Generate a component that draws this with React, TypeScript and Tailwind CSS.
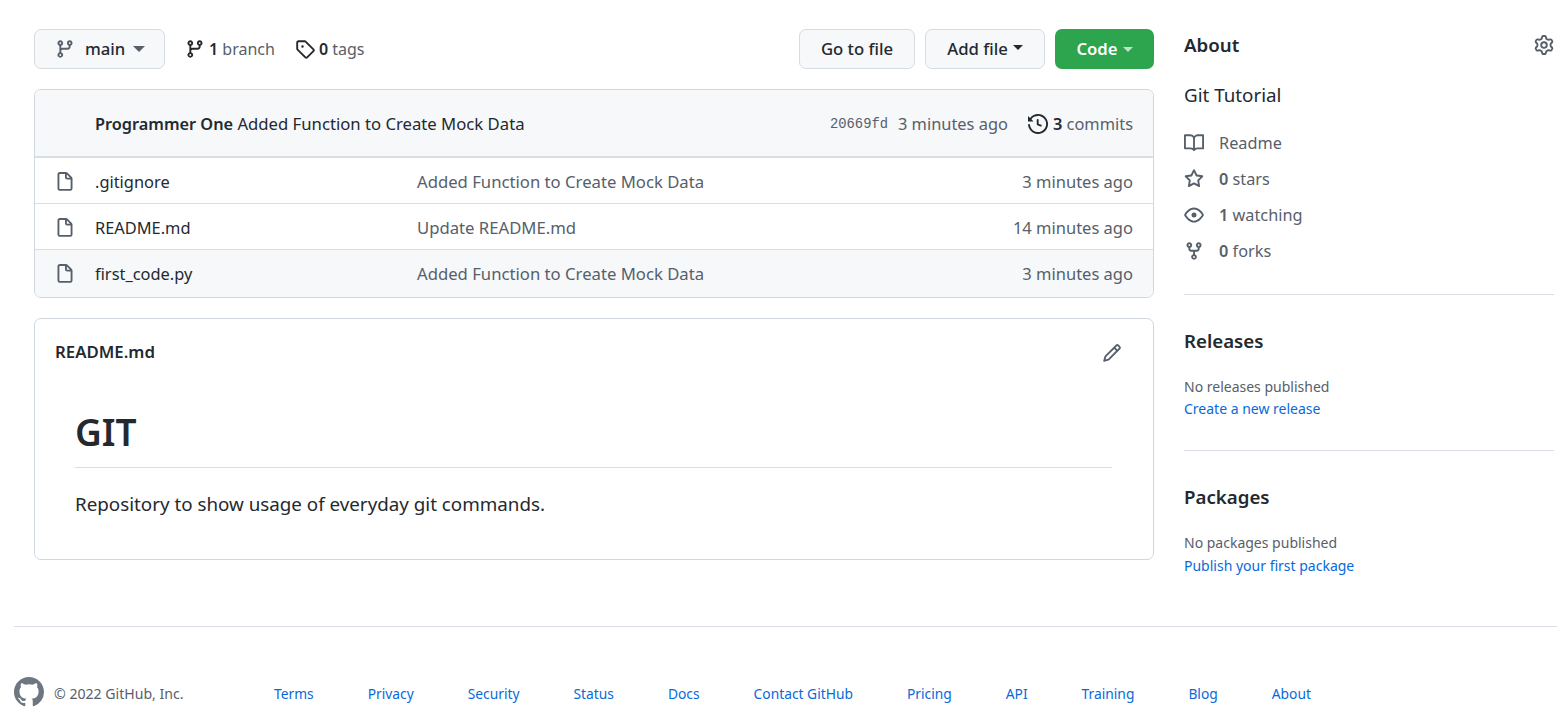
import type { ReactNode } from 'react';

const P = {
  branch: 'M11.75 2.5a.75.75 0 100 1.5.75.75 0 000-1.5zm-2.25.75a2.25 2.25 0 113 2.122V6A2.5 2.5 0 0110 8.5H6a1 1 0 00-1 1v1.128a2.251 2.251 0 11-1.5 0V5.372a2.25 2.25 0 111.5 0v1.836A2.492 2.492 0 016 7h4a1 1 0 001-1v-.628A2.25 2.25 0 019.5 3.25zM4.25 12a.75.75 0 100 1.5.75.75 0 000-1.5zM3.5 3.25a.75.75 0 111.5 0 .75.75 0 01-1.5 0z',
  tag: 'M2.5 7.775V2.75a.25.25 0 01.25-.25h5.025a.25.25 0 01.177.073l6.25 6.25a.25.25 0 010 .354l-5.025 5.025a.25.25 0 01-.354 0l-6.25-6.25a.25.25 0 01-.073-.177zm-1.5 0V2.75C1 1.784 1.784 1 2.75 1h5.025c.464 0 .91.184 1.238.513l6.25 6.25a1.75 1.75 0 010 2.474l-5.026 5.026a1.75 1.75 0 01-2.474 0l-6.25-6.25A1.75 1.75 0 011 7.775zM6 5a1 1 0 100 2 1 1 0 000-2z',
  history: 'M1.643 3.143L.427 1.927A.25.25 0 000 2.104V5.75c0 .138.112.25.25.25h3.646a.25.25 0 00.177-.427L2.715 4.215a6.5 6.5 0 11-1.18 4.458.75.75 0 10-1.493.154 8.001 8.001 0 101.6-5.684zM7.75 4a.75.75 0 01.75.75v2.992l2.028.812a.75.75 0 01-.557 1.392l-2.5-1A.75.75 0 017 8.25v-3.5A.75.75 0 017.75 4z',
  file: 'M3.75 1.5a.25.25 0 00-.25.25v11.5c0 .138.112.25.25.25h8.5a.25.25 0 00.25-.25V6H9.75A1.75 1.75 0 018 4.25V1.5H3.75zm5.75.56v2.19c0 .138.112.25.25.25h2.19L9.5 2.06zM2 1.75C2 .784 2.784 0 3.75 0h5.086c.464 0 .909.184 1.237.513l3.414 3.414c.329.328.513.773.513 1.237v8.086A1.75 1.75 0 0112.25 15h-8.5A1.75 1.75 0 012 13.25V1.75z',
  pencil: 'M11.013 1.427a1.75 1.75 0 012.474 0l1.086 1.086a1.75 1.75 0 010 2.474l-8.61 8.61c-.21.21-.47.364-.756.445l-3.251.93a.75.75 0 01-.927-.928l.929-3.25a1.75 1.75 0 01.445-.758l8.61-8.61zm1.414 1.06a.25.25 0 00-.354 0L10.811 3.75l1.439 1.44 1.263-1.263a.25.25 0 000-.354l-1.086-1.086zM11.189 6.25L9.75 4.81l-6.286 6.287a.25.25 0 00-.064.108l-.558 1.953 1.953-.558a.249.249 0 00.108-.064l6.286-6.286z',
  book: 'M0 1.75A.75.75 0 01.75 1h4.253c1.227 0 2.317.59 3 1.501A3.744 3.744 0 0111.006 1h4.245a.75.75 0 01.75.75v10.5a.75.75 0 01-.75.75h-4.507a2.25 2.25 0 00-1.591.659l-.622.621a.75.75 0 01-1.06 0l-.622-.621A2.25 2.25 0 005.258 13H.75a.75.75 0 01-.75-.75V1.75zm8.755 3a2.25 2.25 0 012.25-2.25H14.5v9h-3.757c-.71 0-1.4.201-1.992.572l.004-7.322zm-1.504 7.324l.004-5.073-.002-2.253A2.25 2.25 0 005.003 2.5H1.5v9h3.757a3.75 3.75 0 011.994.574z',
  star: 'M8 .25a.75.75 0 01.673.418l1.882 3.815 4.21.612a.75.75 0 01.416 1.279l-3.046 2.97.719 4.192a.75.75 0 01-1.088.791L8 12.347l-3.766 1.98a.75.75 0 01-1.088-.79l.72-4.194L.818 6.374a.75.75 0 01.416-1.28l4.21-.611L7.327.668A.75.75 0 018 .25zm0 2.445L6.615 5.5a.75.75 0 01-.564.41l-3.097.45 2.24 2.184a.75.75 0 01.216.664l-.528 3.084 2.769-1.456a.75.75 0 01.698 0l2.77 1.456-.53-3.084a.75.75 0 01.216-.664l2.24-2.183-3.096-.45a.75.75 0 01-.564-.41L8 2.694v.001z',
  eye: 'M1.679 7.932c.412-.621 1.242-1.75 2.366-2.717C5.175 4.242 6.527 3.5 8 3.5c1.473 0 2.824.742 3.955 1.715 1.124.967 1.954 2.096 2.366 2.717a.119.119 0 010 .136c-.412.621-1.242 1.75-2.366 2.717C10.825 11.758 9.473 12.5 8 12.5c-1.473 0-2.824-.742-3.955-1.715C2.92 9.818 2.09 8.69 1.679 8.068a.119.119 0 010-.136zM8 2c-1.981 0-3.67.992-4.933 2.078C1.797 5.169.88 6.423.43 7.1a1.619 1.619 0 000 1.798c.45.678 1.367 1.932 2.637 3.024C4.329 13.008 6.019 14 8 14c1.981 0 3.67-.992 4.933-2.078 1.27-1.091 2.187-2.345 2.637-3.023a1.619 1.619 0 000-1.798c-.45-.678-1.367-1.932-2.637-3.023C11.671 2.992 9.981 2 8 2zm0 8a2 2 0 100-4 2 2 0 000 4z',
  fork: 'M5 3.25a.75.75 0 11-1.5 0 .75.75 0 011.5 0zm0 2.122a2.25 2.25 0 10-1.5 0v.878A2.25 2.25 0 005.75 8.5h1.5v2.128a2.251 2.251 0 101.5 0V8.5h1.5a2.25 2.25 0 002.25-2.25v-.878a2.25 2.25 0 10-1.5 0v.878a.75.75 0 01-.75.75h-4.5A.75.75 0 015 6.25v-.878zm3.75 7.378a.75.75 0 11-1.5 0 .75.75 0 011.5 0zm3-8.75a.75.75 0 100-1.5.75.75 0 000 1.5z',
  gear: 'M7.429 1.525a6.593 6.593 0 011.142 0c.036.003.108.036.137.146l.289 1.105c.147.56.55.967.997 1.189.174.086.341.183.501.29.417.278.97.423 1.53.27l1.102-.303c.11-.03.175.016.195.046.219.31.41.641.573.989.014.031.022.11-.059.19l-.815.806c-.411.406-.562.957-.53 1.456a4.588 4.588 0 010 .582c-.032.499.119 1.05.53 1.456l.815.806c.08.08.073.159.059.19a6.494 6.494 0 01-.573.99c-.02.029-.086.074-.195.045l-1.103-.303c-.559-.153-1.112-.008-1.529.27-.16.107-.327.204-.5.29-.449.222-.851.628-.998 1.189l-.289 1.105c-.029.11-.101.143-.137.146a6.613 6.613 0 01-1.142 0c-.036-.003-.108-.037-.137-.146l-.289-1.105c-.147-.56-.55-.967-.997-1.189a4.502 4.502 0 01-.501-.29c-.417-.278-.97-.423-1.53-.27l-1.102.303c-.11.03-.175-.016-.195-.046a6.492 6.492 0 01-.573-.989c-.014-.031-.022-.11.059-.19l.815-.806c.411-.406.562-.957.53-1.456a4.587 4.587 0 010-.582c.032-.499-.119-1.05-.53-1.456l-.815-.806c-.08-.08-.073-.159-.059-.19a6.44 6.44 0 01.573-.99c.02-.029.086-.075.195-.045l1.103.303c.559.153 1.112.008 1.529-.27.16-.107.327-.204.5-.29.449-.222.851-.628.998-1.189l.289-1.105c.029-.11.101-.143.137-.146zM8 0c-.236 0-.47.01-.701.03-.743.065-1.29.615-1.458 1.261l-.29 1.106c-.017.066-.078.158-.211.224a5.994 5.994 0 00-.668.386c-.123.082-.233.09-.3.071L3.27 2.776c-.644-.177-1.392.02-1.82.63a7.977 7.977 0 00-.704 1.217c-.315.675-.111 1.422.363 1.891l.815.806c.05.048.098.147.088.294a6.084 6.084 0 000 .772c.01.147-.038.246-.088.294l-.815.806c-.474.469-.678 1.216-.363 1.891.2.428.436.835.704 1.218.428.609 1.176.806 1.82.63l1.103-.303c.066-.019.176-.011.299.071.213.143.436.272.668.386.133.066.194.158.212.224l.289 1.106c.169.646.715 1.196 1.458 1.26a8.094 8.094 0 001.402 0c.743-.064 1.29-.614 1.458-1.26l.29-1.106c.017-.066.078-.158.211-.224a5.98 5.98 0 00.668-.386c.123-.082.233-.09.3-.071l1.102.302c.644.177 1.392-.02 1.82-.63.268-.382.505-.789.704-1.217.315-.675.111-1.422-.364-1.891l-.814-.806c-.05-.048-.098-.147-.088-.294a6.1 6.1 0 000-.772c-.01-.147.039-.246.088-.294l.814-.806c.475-.469.679-1.216.364-1.891a7.992 7.992 0 00-.704-1.218c-.428-.609-1.176-.806-1.82-.63l-1.103.303c-.066.019-.176.011-.299-.071a5.991 5.991 0 00-.668-.386c-.133-.066-.194-.158-.212-.224L10.16 1.29C9.99.645 9.444.095 8.701.031A8.094 8.094 0 008 0zm1.5 8a1.5 1.5 0 11-3 0 1.5 1.5 0 013 0zM11 8a3 3 0 11-6 0 3 3 0 016 0z',
  github: 'M8 0C3.58 0 0 3.58 0 8c0 3.54 2.29 6.53 5.47 7.59.4.07.55-.17.55-.38 0-.19-.01-.82-.01-1.49-2.01.37-2.53-.49-2.69-.94-.09-.23-.48-.94-.82-1.13-.28-.15-.68-.52-.01-.53.63-.01 1.08.58 1.23.82.72 1.21 1.87.87 2.33.66.07-.52.28-.87.51-1.07-1.78-.2-3.64-.89-3.64-3.95 0-.87.31-1.59.82-2.15-.08-.2-.36-1.02.08-2.12 0 0 .67-.21 2.2.82.64-.18 1.32-.27 2-.27.68 0 1.36.09 2 .27 1.53-1.04 2.2-.82 2.2-.82.44 1.1.16 1.92.08 2.12.51.56.82 1.27.82 2.15 0 3.07-1.87 3.75-3.65 3.95.29.25.54.73.54 1.48 0 1.07-.01 1.93-.01 2.2 0 .21.15.46.55.38A8.013 8.013 0 0016 8c0-4.42-3.58-8-8-8z',
};

function Icon({ d, className = 'w-5 h-5 text-[#57606a]' }: { d: string; className?: string }) {
  return (
    <svg viewBox="0 0 16 16" fill="currentColor" className={`shrink-0 ${className}`}>
      <path fillRule="evenodd" d={d} />
    </svg>
  );
}

function Caret({ className = '' }: { className?: string }) {
  return <span className={`inline-block w-0 h-0 border-x-[5px] border-x-transparent border-t-[5px] ${className}`} />;
}

function Btn({ children, className = '' }: { children: ReactNode; className?: string }) {
  return (
    <button className={`h-10 flex items-center justify-center gap-[5px] rounded-[7px] border border-[#d8dbdf] bg-[#f6f8fa] font-medium text-[#24292f] ${className}`}>
      {children}
    </button>
  );
}

const files = [
  { name: '.gitignore', msg: 'Added Function to Create Mock Data', age: '3 minutes ago' },
  { name: 'README.md', msg: 'Update README.md', age: '14 minutes ago' },
  { name: 'first_code.py', msg: 'Added Function to Create Mock Data', age: '3 minutes ago' },
];

const footerLinks = ['Terms', 'Privacy', 'Security', 'Status', 'Docs', 'Contact GitHub', 'Pricing', 'API', 'Training', 'Blog', 'About'];

const stats = [
  { icon: P.book, strong: '', text: 'Readme' },
  { icon: P.star, strong: '0', text: 'stars' },
  { icon: P.eye, strong: '1', text: 'watching' },
  { icon: P.fork, strong: '0', text: 'forks' },
];

export default function App() {
  return (
    <div className="min-h-[714px] bg-white text-[16.7px] leading-[26px] text-[#24292f] overflow-hidden font-['Noto_Sans','Open_Sans',sans-serif]">
      <div className="flex gap-[30px] pl-[34px] pt-[29px]">
        {/* Main column */}
        <div className="w-[1120px]">
          <div className="flex items-center">
            <button className="h-10 w-[131px] pl-[20px] flex items-center rounded-[7px] border border-[#d8dbdf] bg-[#f6f8fa] font-medium">
              <Icon d={P.branch} />
              <span className="ml-[10px]">main</span>
              <Caret className="ml-[8px] border-x-[6px] border-t-[6px] border-t-[#57606a]" />
            </button>
            <div className="ml-[20px] flex items-center gap-[4px] text-[16px] text-[#57606a]">
              <Icon d={P.branch} className="w-5 h-5 text-[#24292f]" />
              <span><b className="font-semibold text-[#24292f]">1</b> branch</span>
            </div>
            <div className="ml-[20px] flex items-center gap-[4px] text-[16px] text-[#57606a]">
              <Icon d={P.tag} className="w-5 h-5 text-[#24292f]" />
              <span><b className="font-semibold text-[#24292f]">0</b> tags</span>
            </div>
            <div className="ml-auto flex items-center gap-[10px]">
              <Btn className="w-[116px]">Go to file</Btn>
              <Btn className="w-[120px]">Add file<Caret className="border-t-[#24292f] -translate-y-[2px]" /></Btn>
              <button className="h-10 w-[99px] flex items-center justify-center gap-[5px] rounded-[7px] bg-[#2da44e] font-semibold text-white">
                Code<Caret className="border-t-[#bfe3ca]" />
              </button>
            </div>
          </div>

          <div className="mt-[20px] rounded-[7px] border border-[#d0d7de] overflow-hidden">
            <div className="h-[68px] pt-[2px] pl-[60px] pr-[20px] flex items-center bg-[#f6f8fa] border-b-2 border-[#d8dee4]">
              <span><b className="font-semibold text-[16.3px]">Programmer One</b> Added Function to Create Mock Data</span>
              <span className="ml-auto mt-px font-['Liberation_Mono',monospace] text-[13.8px] text-[#57606a]">20669fd</span>
              <span className="ml-[10px] text-[16.4px] text-[#57606a]">3 minutes ago</span>
              <Icon d={P.history} className="ml-[20px] w-5 h-5 text-[#24292f]" />
              <span className="ml-[5px] text-[16.4px] text-[#57606a]"><b className="font-semibold text-[#24292f]">3</b> commits</span>
            </div>
            {files.map((f) => (
              <div key={f.name} className="h-[46px] pt-[2px] pl-[20px] pr-[20px] flex items-center border-b border-[#d8dee4] last:h-[47px] last:pt-px last:border-b-0 last:bg-[#f6f8fa]">
                <Icon d={P.file} />
                <span className="ml-[20px] w-[322px] text-[16.4px]">{f.name}</span>
                <span className="text-[#57606a]">{f.msg}</span>
                <span className="ml-auto text-[16.5px] text-[#57606a]">{f.age}</span>
              </div>
            ))}
          </div>

          <div className="mt-[20px] h-[242px] rounded-[7px] border border-[#d0d7de]">
            <div className="h-[66px] pl-[20px] pr-[31px] flex items-center justify-between font-semibold">
              <span className="text-[16.8px]">README.md</span>
              <Icon d={P.pencil} className="mt-px w-5 h-5 text-[#57606a]" />
            </div>
            <div className="pl-[40px] pr-[41px]">
              <h1 className="mt-[23px] h-[60px] border-b border-[#d8dee4] text-[37px] leading-[48px] font-semibold">GIT</h1>
              <p className="mt-[23px] text-[18.8px]">Repository to show usage of everyday git commands.</p>
            </div>
          </div>
        </div>

        {/* Sidebar */}
        <div className="w-[370px]">
          <div className="mt-px flex items-center justify-between">
            <h2 className="text-[18.7px] leading-[30px] font-semibold">About</h2>
            <Icon d={P.gear} />
          </div>
          <p className="mt-[20px] text-[18.8px] leading-[30px]">Git Tutorial</p>
          <div className="mt-[20px] flex flex-col gap-[10px]">
            {stats.map((s) => (
              <div key={s.icon} className="h-[26px] flex items-center text-[16.3px] text-[#57606a]">
                <Icon d={s.icon} />
                <span className="ml-[15px]">
                  {s.strong && <b className="font-semibold">{s.strong} </b>}
                  {s.text}
                </span>
              </div>
            ))}
          </div>
          <div className="mt-[30px] border-t border-[#d8dee4] pt-[31px]">
            <h2 className="text-[18.7px] leading-[30px] font-semibold">Releases</h2>
            <p className="mt-[20px] text-[14px] leading-[22px] text-[#57606a]">No releases published</p>
            <a className="block text-[14px] leading-[22px] text-[#0969da]">Create a new release</a>
          </div>
          <div className="mt-[30px] border-t border-[#d8dee4] pt-[31px]">
            <h2 className="text-[18.7px] leading-[30px] font-semibold">Packages</h2>
            <p className="mt-[19px] text-[14px] leading-[23px] text-[#57606a]">No packages published</p>
            <a className="block text-[14px] leading-[23px] text-[#0969da]">Publish your first package</a>
          </div>
        </div>
      </div>

      <div className="ml-[14px] mt-[49px] h-[88px] border-t border-[#d8dee4] flex items-start pt-[50px] text-[13.8px] leading-[22px]">
        <Icon d={P.github} className="w-[30px] h-[30px] text-[#6e7781]" />
        <span className="ml-[10px] mt-[6px] w-[220px] text-[14.1px] text-[#57606a]">© 2022 GitHub, Inc.</span>
        <div className="mt-[6px] flex gap-[54px] text-[#0969da]">
          {footerLinks.map((l) => <a key={l}>{l}</a>)}
        </div>
      </div>
    </div>
  );
}
